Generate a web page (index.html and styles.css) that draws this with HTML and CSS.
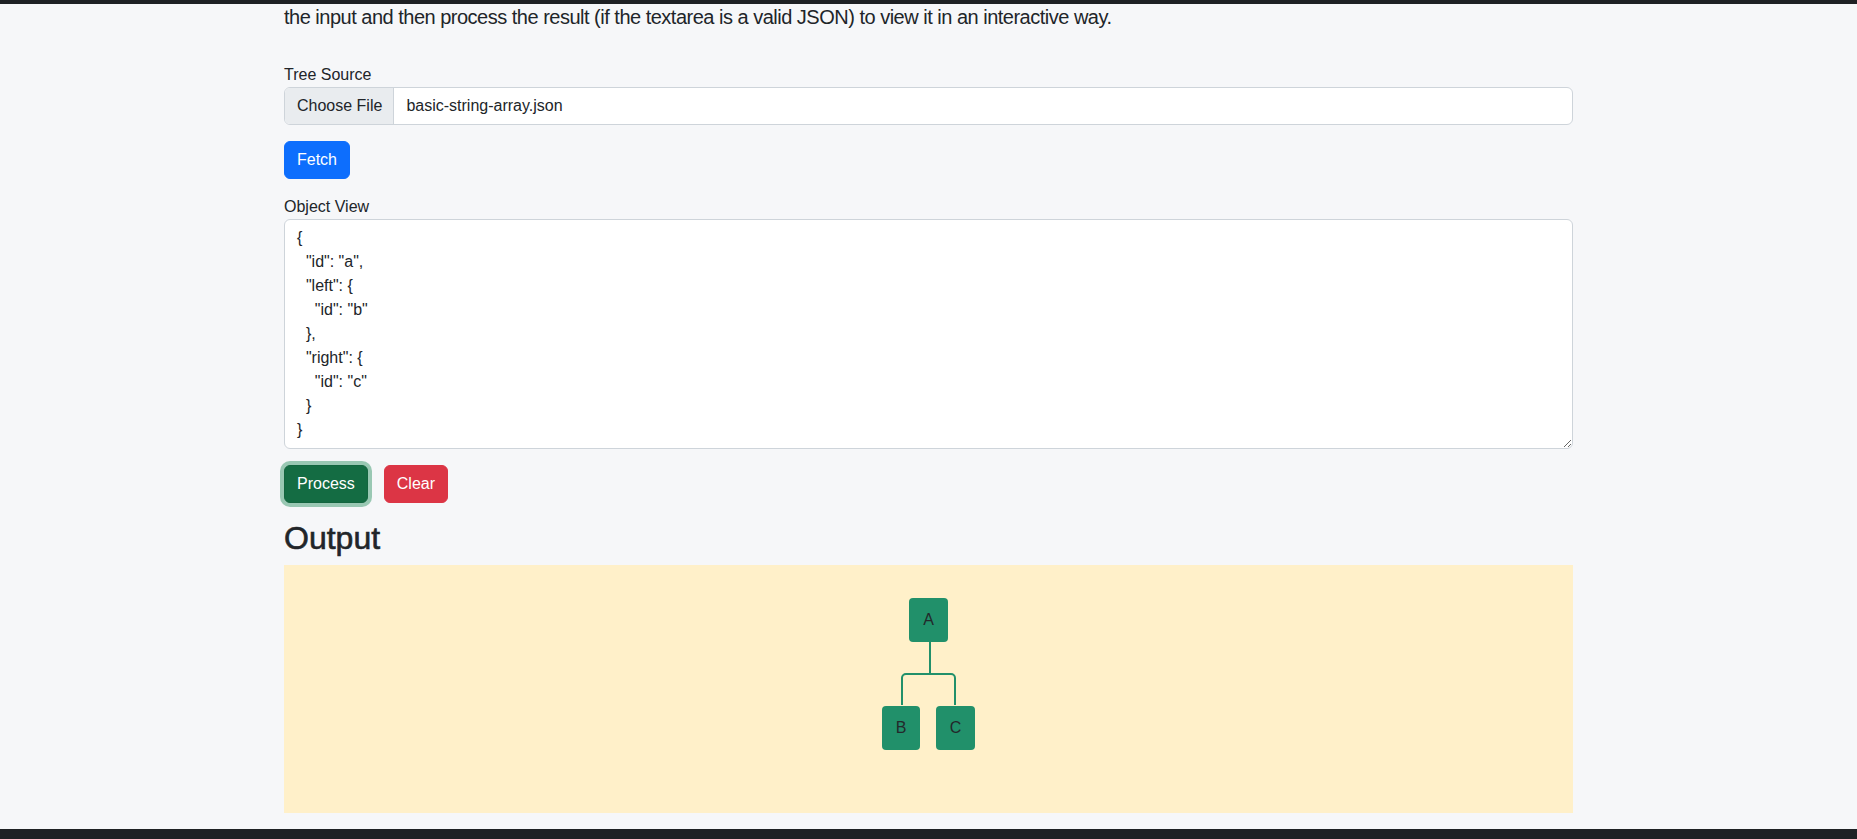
FILE: index.html
```html
<!DOCTYPE html>
<html lang="en">
<head>
<meta charset="utf-8">
<title>Tree Viewer</title>
<link rel="stylesheet" href="styles.css">
</head>
<body>
<div class="navbar-edge"></div>
<main class="container">
  <p class="lead">the input and then process the result (if the textarea is a valid JSON) to view it in an interactive way.</p>

  <label class="form-label">Tree Source</label>
  <div class="file-input">
    <span class="file-btn">Choose File</span>
    <span class="file-name">basic-string-array.json</span>
  </div>

  <div class="actions">
    <button class="btn btn-primary">Fetch</button>
  </div>

  <label class="form-label">Object View</label>
  <textarea class="form-control" rows="9" spellcheck="false">{
  "id": "a",
  "left": {
    "id": "b"
  },
  "right": {
    "id": "c"
  }
}</textarea>

  <div class="actions actions-row">
    <button class="btn btn-success focused">Process</button>
    <button class="btn btn-danger">Clear</button>
  </div>

  <h2 class="section-title">Output</h2>
  <div class="output">
    <div class="tree">
      <div class="node node-a">A</div>
      <svg class="connector" width="93" height="64" viewBox="0 0 93 64" aria-hidden="true">
        <path d="M48 0 V32" fill="none" stroke="#21906a" stroke-width="2"/>
        <path d="M20 63 V36 a4 4 0 0 1 4 -4 H69 a4 4 0 0 1 4 4 V63" fill="none" stroke="#21906a" stroke-width="2"/>
      </svg>
      <div class="children">
        <div class="node node-b">B</div>
        <div class="node node-c">C</div>
      </div>
    </div>
  </div>
</main>
<div class="footer-edge"></div>
</body>
</html>
```
FILE: styles.css
```css
html, body {
  margin: 0;
  padding: 0;
}

body {
  background: #f6f7f9;
  color: #212529;
  font-family: "Liberation Sans", Arial, sans-serif;
  font-size: 16px;
  line-height: 1.5;
  min-height: 839px;
  overflow: hidden;
}

.navbar-edge {
  position: fixed;
  top: 0;
  left: 0;
  right: 0;
  height: 4px;
  background: #1e2124;
  z-index: 10;
}

.footer-edge {
  position: fixed;
  bottom: 0;
  left: 0;
  right: 0;
  height: 10px;
  background: #1e2124;
  z-index: 10;
}

.container {
  width: 1289px;
  margin: 0 auto;
  padding-top: 2px;
}

.lead {
  margin: 0 0 31px;
  font-size: 20px;
  line-height: 30px;
  font-weight: 300;
  letter-spacing: -0.5px;
  color: #212529;
}

.form-label {
  display: block;
  height: 24px;
  line-height: 24px;
  margin: 0;
}

.file-input {
  display: flex;
  align-items: stretch;
  height: 38px;
  box-sizing: border-box;
  border: 1px solid #ced4da;
  border-radius: 6px;
  background: #fff;
  overflow: hidden;
}

.file-btn {
  display: flex;
  align-items: center;
  padding: 0 11px 0 12px;
  background: #e9ecef;
  border-right: 1px solid #ced4da;
  color: #212529;
}

.file-name {
  display: flex;
  align-items: center;
  padding: 0 12px;
  color: #212529;
}

.actions {
  display: flex;
  gap: 16px;
  margin: 16px 0 16px;
}

.actions-row {
  margin: 16px 0 16px;
}

.btn {
  font-family: inherit;
  font-size: 16px;
  line-height: 24px;
  padding: 6px 12px;
  border: 1px solid transparent;
  border-radius: 6px;
  color: #fff;
  cursor: pointer;
}

.btn-primary {
  background: #0d6efd;
  border-color: #0d6efd;
}

.btn-success {
  background: #198754;
  border-color: #198754;
}

.btn-success.focused {
  background: #146c43;
  border-color: #13653f;
  box-shadow: 0 0 0 4px rgba(60, 153, 110, 0.5);
}

.btn-danger {
  background: #dc3545;
  border-color: #dc3545;
}

.form-control {
  display: block;
  width: 100%;
  box-sizing: border-box;
  margin: 0;
  padding: 6px 12px;
  font-family: "Liberation Sans", Arial, sans-serif;
  font-size: 16px;
  line-height: 24px;
  color: #212529;
  background: #fff;
  border: 1px solid #ced4da;
  border-radius: 6px;
  resize: vertical;
  outline: none;
}

.section-title {
  margin: 0 0 8px;
  font-size: 32px;
  line-height: 38px;
  font-weight: 500;
  -webkit-text-stroke: 0.6px #212529;
  color: #212529;
}

.output {
  background: #fff0c9;
  height: 248px;
  box-sizing: border-box;
  padding-top: 33px;
  display: flex;
  justify-content: center;
}

.tree {
  display: flex;
  flex-direction: column;
  align-items: center;
}

.children {
  display: flex;
  gap: 16px;
}

.node {
  height: 44px;
  display: flex;
  align-items: center;
  justify-content: center;
  background: #21906a;
  border-radius: 4px;
  color: #23282b;
  font-size: 16px;
}

.node-a { width: 39px; }
.node-b { width: 38px; }
.node-c { width: 39px; }

.connector {
  display: block;
}
```
